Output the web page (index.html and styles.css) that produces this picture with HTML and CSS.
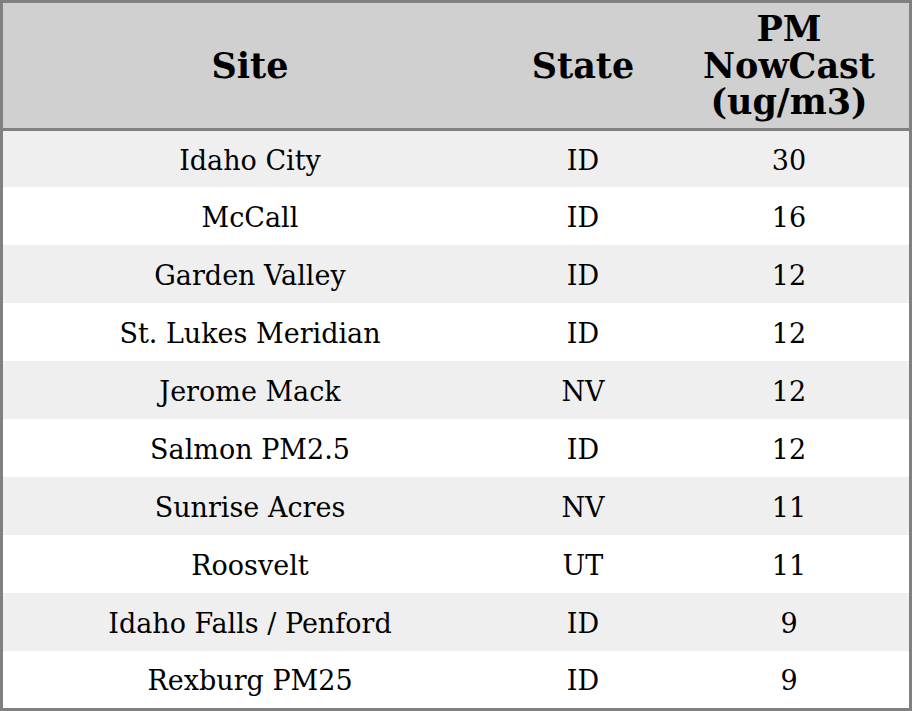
FILE: index.html
```html
<!DOCTYPE html>
<html>
<head>
<meta charset="utf-8">
<link rel="stylesheet" href="styles.css">
</head>
<body>
<table class="aq">
  <colgroup><col class="c1"><col class="c2"><col class="c3"></colgroup>
  <thead>
    <tr><th>Site</th><th>State</th><th>PM<br>NowCast<br>(ug/m3)</th></tr>
  </thead>
  <tbody>
    <tr class="first"><td>Idaho City</td><td>ID</td><td>30</td></tr>
    <tr><td>McCall</td><td>ID</td><td>16</td></tr>
    <tr><td>Garden Valley</td><td>ID</td><td>12</td></tr>
    <tr><td>St. Lukes Meridian</td><td>ID</td><td>12</td></tr>
    <tr><td>Jerome Mack</td><td>NV</td><td>12</td></tr>
    <tr><td>Salmon PM2.5</td><td>ID</td><td>12</td></tr>
    <tr><td>Sunrise Acres</td><td>NV</td><td>11</td></tr>
    <tr><td>Roosvelt</td><td>UT</td><td>11</td></tr>
    <tr><td>Idaho Falls / Penford</td><td>ID</td><td>9</td></tr>
    <tr class="last"><td>Rexburg PM25</td><td>ID</td><td>9</td></tr>
  </tbody>
</table>
</body>
</html>
```
FILE: styles.css
```css
html, body { margin: 0; padding: 0; background: #fff; }
.aq {
  width: 912px;
  height: 711px;
  box-sizing: border-box;
  border: 3px solid #808080;
  border-collapse: separate;
  border-spacing: 0;
  table-layout: fixed;
  font-family: "DejaVu Serif", serif;
  color: #000;
}
.c1 { width: 494px; }
.c2 { width: 172px; }
.c3 { width: 240px; }
.aq th {
  background: #d0d0d0;
  height: 124px;
  padding: 1px 0 0;
  font-size: 35px;
  line-height: 36.5px;
  font-weight: bold;
  text-align: center;
  vertical-align: middle;
  border-bottom: 3px solid #808080;
}
.aq td {
  height: 56px;
  padding: 2px 0 0;
  font-size: 27px;
  text-align: center;
  vertical-align: middle;
}
.aq tr.first td { height: 54px; }
.aq tr.last td { height: 55px; }
.aq tbody tr:nth-child(odd) td { background: #efefef; }
.aq tbody tr:nth-child(even) td { background: #fff; }
```
